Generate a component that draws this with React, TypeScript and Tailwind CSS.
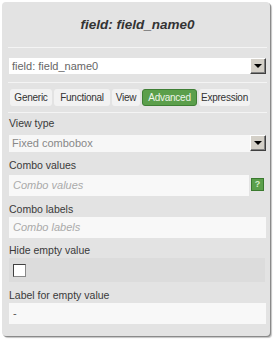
import React from "react";

const TABS: { label: string; w: string }[] = [
  { label: "Generic", w: "w-[42px]" },
  { label: "Functional", w: "w-[56px]" },
  { label: "View", w: "w-[28px]" },
  { label: "Advanced", w: "w-[55px]" },
  { label: "Expression", w: "w-[51px]" },
];

function DropButton() {
  return (
    <div className="w-[16px] h-[16px] shrink-0 bg-[#d4d0c8] border border-t-white border-l-white border-b-[#404040] border-r-[#404040] shadow-[inset_-1px_-1px_0_#808080] flex items-center justify-center">
      <div className="w-0 h-0 border-l-[4px] border-r-[4px] border-t-[4px] border-l-transparent border-r-transparent border-t-black" />
    </div>
  );
}

function Separator() {
  return <div className="h-px bg-[#f4f4f4] -ml-px mr-[-1px]" />;
}

function Label({ text, className = "" }: { text: string; className?: string }) {
  return (
    <div className={`h-[14px] flex items-center text-[10.5px] text-[#3a3a3a] ${className}`}>{text}</div>
  );
}

export default function App() {
  return (
    <div className="w-[273px] h-[339px] bg-white pt-[2px] pl-[2px]" style={{ fontFamily: '"Liberation Sans", Arial, sans-serif' }}>
      <div className="w-[268px] h-[334px] bg-[#e3e3e3] rounded-[4px] shadow-[1px_1px_0_#8a8a8a,2px_2px_1px_#c4c4c4] pl-[7px] pr-[4px] flex flex-col">
        <div className="h-[45px] flex items-center justify-center pt-[1px]">
          <span className="text-[13.5px] font-bold italic text-[#333]">field: field_name0</span>
        </div>
        <Separator />

        <div className="mt-[10px] h-[16px] flex">
          <div className="flex-1 bg-white flex items-center pl-[3px] text-[11px] text-[#666]">field: field_name0</div>
          <DropButton />
        </div>

        <div className="mt-[8px]"><Separator /></div>

        <div className="mt-[6px] flex gap-[2px] pl-px">
          {TABS.map((t) => (
            <div
              key={t.label}
              className={`${t.w} shrink-0 h-[17px] flex items-center justify-center rounded-[3px] text-[10px] tracking-[-0.25px] ${
                t.label === "Advanced"
                  ? "bg-[#5b9f4b] border border-[#3f7f35] text-[#eef5ea]"
                  : "bg-[#f2f2f2] text-[#333]"
              }`}
            >
              {t.label}
            </div>
          ))}
        </div>

        <div className="mt-[6px]"><Separator /></div>

        <Label text="View type" className="mt-[4px]" />
        <div className="mt-[4px] h-[17px] flex">
          <div className="flex-1 bg-[#f7f7f7] flex items-center pl-[3px] text-[11px] text-[#888]">Fixed combobox</div>
          <DropButton />
        </div>

        <Label text="Combo values" className="mt-[7px]" />
        <div className="mt-[2px] flex items-start gap-[2px]">
          <div className="w-[240px] h-[21px] bg-[#f8f8f8] flex items-center pl-[4px] text-[11px] italic text-[#aaa]">Combo values</div>
          <div className="mt-[3px] w-[13px] h-[13px] bg-[#5b9f4b] border border-[#3a7a2e] flex items-center justify-center text-[9px] font-bold text-[#d6ecc8]">?</div>
        </div>

        <Label text="Combo labels" className="mt-[7px]" />
        <div className="w-[257px] h-[21px] bg-[#f8f8f8] flex items-center pl-[4px] text-[11px] italic text-[#aaa]">Combo labels</div>

        <Label text="Hide empty value" className="mt-[6px]" />
        <div className="w-[256px] h-[24px] bg-[#dcdcdc] flex items-center pl-[4px]">
          <div className="w-[13px] h-[13px] bg-white border border-t-[#404040] border-l-[#404040] border-b-[#888] border-r-[#888]" />
        </div>

        <Label text="Label for empty value" className="mt-[7px]" />
        <div className="w-[257px] h-[21px] bg-[#f8f8f8] flex items-center pl-[4px] text-[11px] text-[#555]">-</div>
      </div>
    </div>
  );
}
